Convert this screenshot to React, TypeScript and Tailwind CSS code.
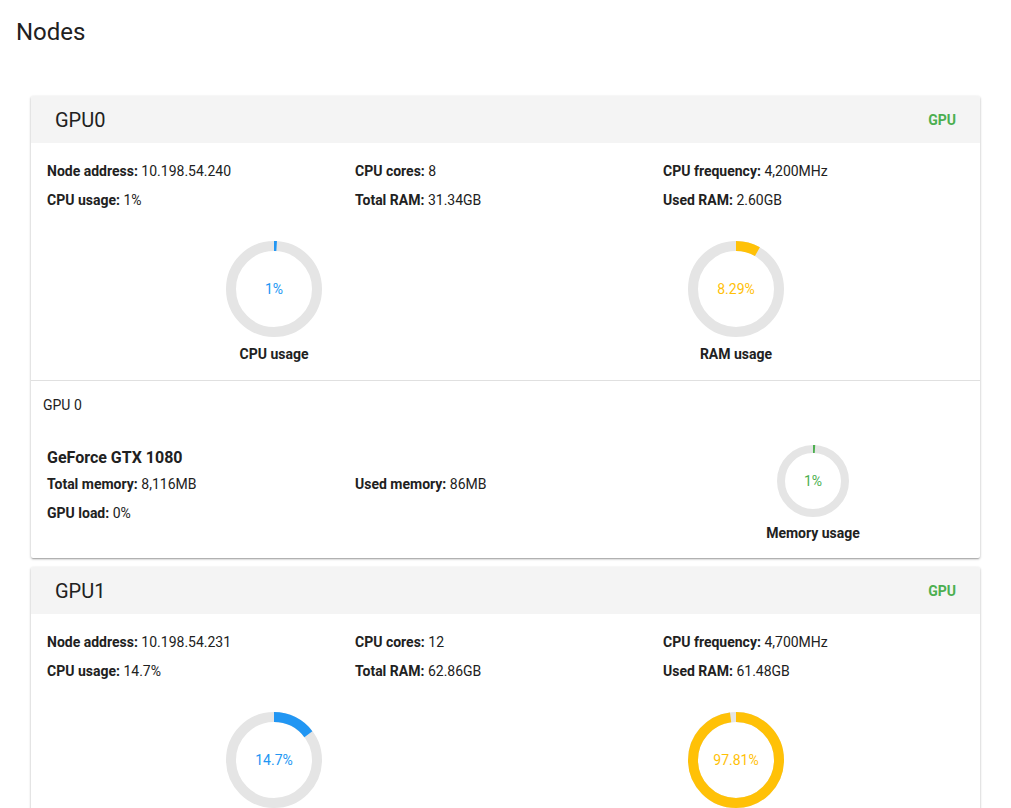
import React from "react";

type Node = {
  name: string;
  address: string;
  cores: number;
  freq: string;
  cpu: number;
  totalRam: string;
  usedRam: string;
  ram: number;
  gpus: { id: string; model: string; total: string; used: string; load: string; mem: number }[];
};

const nodes: Node[] = [
  {
    name: "GPU0",
    address: "10.198.54.240",
    cores: 8,
    freq: "4,200MHz",
    cpu: 1,
    totalRam: "31.34GB",
    usedRam: "2.60GB",
    ram: 8.29,
    gpus: [{ id: "GPU 0", model: "GeForce GTX 1080", total: "8,116MB", used: "86MB", load: "0%", mem: 1 }],
  },
  {
    name: "GPU1",
    address: "10.198.54.231",
    cores: 12,
    freq: "4,700MHz",
    cpu: 14.7,
    totalRam: "62.86GB",
    usedRam: "61.48GB",
    ram: 97.81,
    gpus: [],
  },
];

function Donut({ value, size, thickness, color, textClass }: { value: number; size: number; thickness: number; color: string; textClass: string }) {
  const r = (size - thickness) / 2;
  const c = 2 * Math.PI * r;
  const dash = (c * value) / 100;
  return (
    <div className="relative" style={{ width: size, height: size }}>
      <svg width={size} height={size} viewBox={`0 0 ${size} ${size}`} className="-rotate-90">
        <circle cx={size / 2} cy={size / 2} r={r} fill="none" stroke="#e5e5e5" strokeWidth={thickness} />
        <circle
          cx={size / 2}
          cy={size / 2}
          r={r}
          fill="none"
          stroke={color}
          strokeWidth={thickness}
          strokeDasharray={`${dash} ${c}`}
        />
      </svg>
      <div className={`absolute inset-0 flex items-center justify-center text-sm ${textClass}`}>{value}%</div>
    </div>
  );
}

function Field({ label, value }: { label: string; value: string | number }) {
  return (
    <div className="h-[29px] leading-[29px] text-sm text-[#212121]">
      <span className="font-bold">{label}:</span> {value}
    </div>
  );
}

function NodeCard({ node }: { node: Node }) {
  return (
    <div className="mx-[15px] mb-[9px] bg-white rounded-[2px] shadow-[0_1px_3px_rgba(0,0,0,0.2),0_1px_2px_rgba(0,0,0,0.14),0_2px_1px_-1px_rgba(0,0,0,0.12)]">
      <div className="h-[47px] bg-[#f4f4f4] flex items-center justify-between px-6 rounded-t-[2px]">
        <span className="text-[20px] text-[#212121]">{node.name}</span>
        <span className="text-sm font-bold text-[#4caf50]">GPU</span>
      </div>
      <div className="pl-4 pr-4 pt-[14px] pb-4">
        <div className="grid grid-cols-[308px_308px_1fr]">
          <div>
            <Field label="Node address" value={node.address} />
            <Field label="CPU usage" value={`${node.cpu}%`} />
          </div>
          <div>
            <Field label="CPU cores" value={node.cores} />
            <Field label="Total RAM" value={node.totalRam} />
          </div>
          <div>
            <Field label="CPU frequency" value={node.freq} />
            <Field label="Used RAM" value={node.usedRam} />
          </div>
        </div>
        <div className="grid grid-cols-2 mt-[26px] -ml-1 mr-[-3px]">
          <div className="flex flex-col items-center">
            <Donut value={node.cpu} size={96} thickness={10} color="#2196f3" textClass="text-[#2196f3]" />
            <div className="mt-[7px] text-sm font-bold text-[#212121] leading-5">CPU usage</div>
          </div>
          <div className="flex flex-col items-center">
            <Donut value={node.ram} size={96} thickness={10} color="#ffc107" textClass="text-[#ffc107]" />
            <div className="mt-[7px] text-sm font-bold text-[#212121] leading-5">RAM usage</div>
          </div>
        </div>
      </div>
      {node.gpus.map((g) => (
        <div key={g.id} className="border-t border-[#e0e0e0] px-3 pt-[14px] pb-[15px]">
          <div className="text-sm text-[#212121] leading-5">{g.id}</div>
          <div className="grid grid-cols-[308px_308px_1fr] pl-1 pr-[5px] mt-[30px]">
            <div className="pt-px">
              <div className="text-base font-bold text-[#212121] leading-6">{g.model}</div>
              <Field label="Total memory" value={g.total} />
              <Field label="GPU load" value={g.load} />
            </div>
            <div className="pt-[25px]">
              <Field label="Used memory" value={g.used} />
            </div>
            <div className="flex flex-col items-center">
              <Donut value={g.mem} size={72} thickness={8} color="#4caf50" textClass="text-[#4caf50]" />
              <div className="mt-[6px] text-sm font-bold text-[#212121] leading-5">Memory usage</div>
            </div>
          </div>
        </div>
      ))}
    </div>
  );
}

export default function App() {
  return (
    <div className="min-h-screen bg-white px-4 font-['Roboto',sans-serif]">
      <h1 className="pt-[17px] h-[96px] text-[24px] leading-[30px] text-[#212121]">Nodes</h1>
      {nodes.map((n) => (
        <NodeCard key={n.name} node={n} />
      ))}
    </div>
  );
}
